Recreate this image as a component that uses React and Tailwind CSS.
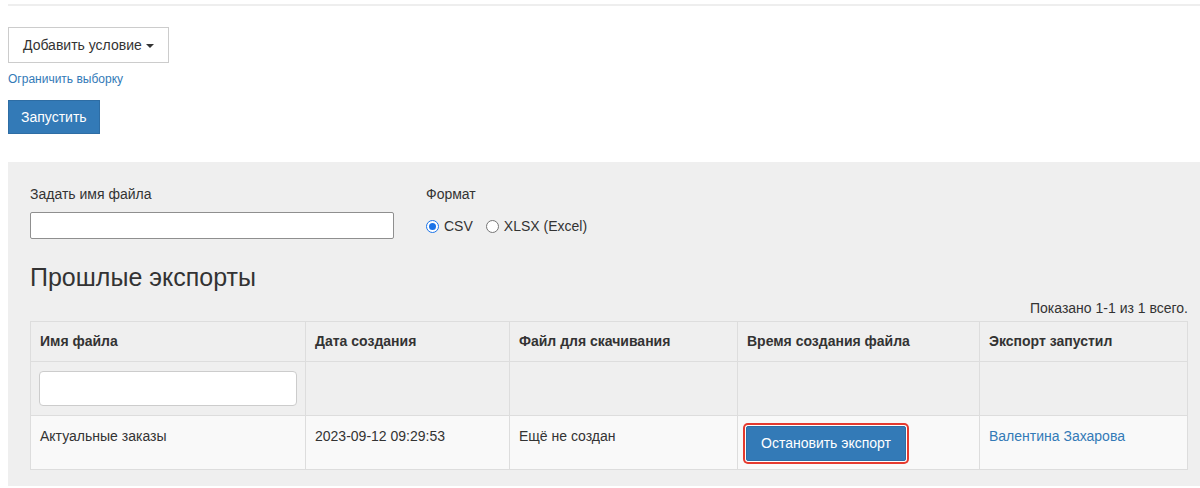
import React from "react";

const font = { fontFamily: '"Liberation Sans", Arial, sans-serif' };

function Radio({ checked, label }) {
  return (
    <label className="flex items-center gap-[5px] text-[14px] text-[#333]">
      {checked ? (
        <span className="w-[13px] h-[13px] rounded-full border border-[#1a73e8] bg-white flex items-center justify-center">
          <span className="w-[7px] h-[7px] rounded-full bg-[#1a73e8]" />
        </span>
      ) : (
        <span className="w-[13px] h-[13px] rounded-full border border-[#767676] bg-white" />
      )}
      <span>{label}</span>
    </label>
  );
}

export default function App() {
  const cols = [
    { title: "Имя файла", w: "w-[275px]" },
    { title: "Дата создания", w: "w-[204px]" },
    { title: "Файл для скачивания", w: "w-[228px]" },
    { title: "Время создания файла", w: "w-[242px]" },
    { title: "Экспорт запустил", w: "" },
  ];

  return (
    <div className="bg-white min-h-[488px] pl-2 pt-1" style={font}>
      <div className="h-[2px] bg-[#eeeeee]" />

      <div className="pt-[21px]">
        <button className="h-[36px] px-[14px] border border-[#cccccc] bg-white text-[14px] text-[#333] flex items-center gap-[4px]">
          Добавить условие
          <span className="inline-block w-0 h-0 border-l-[4px] border-r-[4px] border-t-[4px] border-l-transparent border-r-transparent border-t-[#333] mt-[1px]" />
        </button>
      </div>

      <div className="mt-[9px] text-[12px] leading-[15px] text-[#337ab7]">
        Ограничить выборку
      </div>

      <div className="mt-[13px]">
        <button className="h-[34px] px-[12px] bg-[#337ab7] border border-[#2e6da4] text-white text-[14px]">
          Запустить
        </button>
      </div>

      <div className="mt-[28px] bg-[#efefef] pl-[22px] pr-[12px] pt-[24px] pb-[16px]">
        <div className="flex">
          <div className="w-[396px]">
            <div className="text-[14px] leading-[16px] text-[#333]">Задать имя файла</div>
            <input
              type="text"
              className="mt-[10px] w-[364px] h-[27px] bg-white border border-[#8f8f8f] rounded-[2px] outline-none"
            />
          </div>
          <div>
            <div className="text-[14px] leading-[16px] text-[#333]">Формат</div>
            <div className="mt-[14px] flex items-center gap-[13px]">
              <Radio checked label="CSV" />
              <Radio label="XLSX (Excel)" />
            </div>
          </div>
        </div>

        <h2 className="mt-[24px] text-[25px] leading-[28px] font-light text-[#333]">
          Прошлые экспорты
        </h2>

        <div className="mt-[9px] text-right text-[14px] leading-[16px] text-[#333]">
          Показано 1-1 из 1 всего.
        </div>

        <table className="mt-[5px] w-full border-collapse text-[14px] text-[#333]">
          <thead>
            <tr className="h-[40px]">
              {cols.map((c) => (
                <th
                  key={c.title}
                  className={`${c.w} border border-[#dddddd] text-left font-bold px-[9px] align-middle`}
                >
                  {c.title}
                </th>
              ))}
            </tr>
          </thead>
          <tbody>
            <tr className="h-[54px]">
              <td className="border border-[#dddddd] px-[8px] align-middle">
                <input
                  type="text"
                  className="w-full h-[35px] bg-white border border-[#cccccc] rounded-[4px] outline-none"
                />
              </td>
              <td className="border border-[#dddddd]" />
              <td className="border border-[#dddddd]" />
              <td className="border border-[#dddddd]" />
              <td className="border border-[#dddddd]" />
            </tr>
            <tr className="h-[54px] bg-[#f9f9f9]">
              <td className="border border-[#dddddd] px-[9px] pt-[10px] align-top">Актуальные заказы</td>
              <td className="border border-[#dddddd] px-[9px] pt-[10px] align-top">2023-09-12 09:29:53</td>
              <td className="border border-[#dddddd] px-[9px] pt-[10px] align-top">Ещё не создан</td>
              <td className="border border-[#dddddd] px-[8px] pt-[10px] align-top">
                <button className="h-[35px] px-[14px] bg-[#337ab7] border border-[#2e6da4] text-white text-[14px] rounded-[2px] ring-2 ring-[#e53a2f] ring-offset-1 ring-offset-white">
                  Остановить экспорт
                </button>
              </td>
              <td className="border border-[#dddddd] px-[9px] pt-[10px] align-top text-[#337ab7]">
                Валентина Захарова
              </td>
            </tr>
          </tbody>
        </table>
      </div>
    </div>
  );
}
